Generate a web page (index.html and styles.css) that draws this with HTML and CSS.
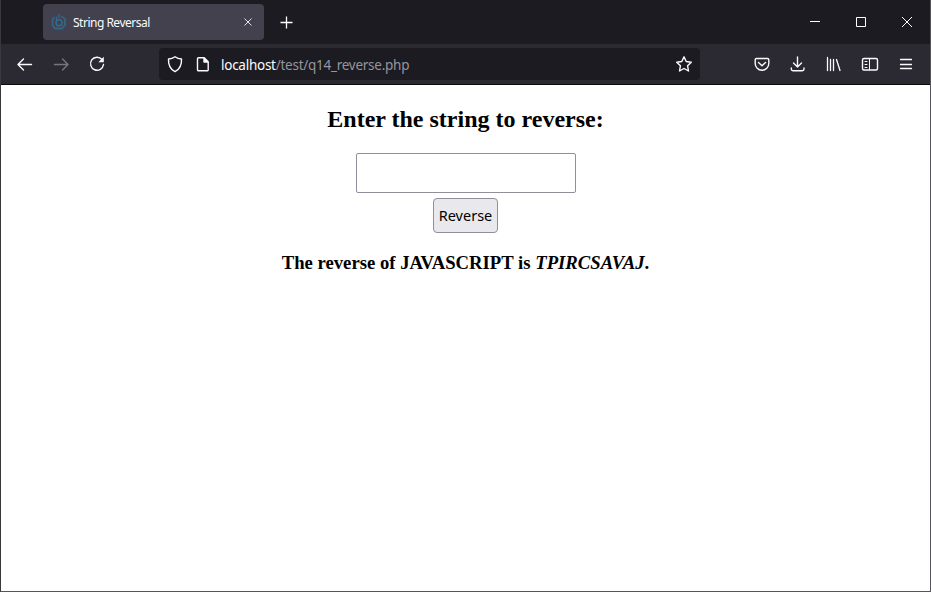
FILE: index.html
```html
<!DOCTYPE html>
<html lang="en">
<head>
<meta charset="utf-8">
<title>String Reversal</title>
<link rel="stylesheet" href="styles.css">
</head>
<body>
<div class="window">
  <header class="titlebar">
    <div class="tab">
      <svg class="favicon" width="16" height="18" viewBox="0 0 16 18" fill="none" stroke="#2f6c93"><path d="M3.500 4L1.500 6.500v5.500L4 15.500h7l3-3.500V6.500L12 4" stroke-width="1.800" stroke-opacity=".85"/><path d="M5.500 3.500v8M8 1v4M11 3v2" stroke-width="1.300"/><circle cx="8" cy="9.800" r="3" stroke-width="1.500"/></svg>
      <span class="tab-title">String Reversal</span>
      <svg class="tab-close" width="10" height="10" viewBox="0 0 10 10" stroke="#e4e4ea" stroke-width="1"><path d="M1.500 1.500l7 7M8.500 1.500l-7 7"/></svg>
    </div>
    <svg class="new-tab" width="14" height="14" viewBox="0 0 14 14" stroke="#fff" stroke-width="1.300"><path d="M7.500 1.500v12M1.500 7.500h12"/></svg>
    <div class="controls">
      <svg width="46" height="44" viewBox="0 0 46 44"><path d="M18 21.500h10" stroke="#fff"/></svg>
      <svg width="46" height="44" viewBox="0 0 46 44"><path d="M18.500 17.500h9v9h-9z" fill="none" stroke="#fff"/></svg>
      <svg width="46" height="44" viewBox="0 0 46 44"><path d="M18 17l10 10M28 17L18 27" stroke="#fff"/></svg>
    </div>
  </header>
  <nav class="toolbar">
    <svg class="tool" viewBox="0 0 36 36"><path d="M24.500 18.500h-13M16.500 13l-5.500 5.500 5.500 5.500"/></svg>
    <svg class="tool dim" viewBox="0 0 36 36"><path d="M11.500 18.500h13M19.500 13l5.500 5.500-5.500 5.500"/></svg>
    <svg class="tool" viewBox="0 0 36 36"><path d="M23 13.500A6.500 6.500 0 1 0 24.500 18.500"/><path d="M24.800 10.800v5.500h-5.500z" fill="#fbfbfe" stroke="none"/></svg>
    <div class="address">
      <svg class="site-icon" viewBox="0 0 20 20"><path d="M10 2.700C8 4.200 5.800 4.900 3.500 5c-.3 5.500 1.700 10.300 6.500 12.700 4.800-2.400 6.800-7.200 6.500-12.700C14.200 4.900 12 4.200 10 2.700z"/></svg>
      <svg class="site-icon page" viewBox="0 0 20 20"><path d="M5.500 3.700h5.700l4 4v8a1 1 0 0 1-1 1H5.500a1 1 0 0 1-1-1v-11a1 1 0 0 1 1-1zM11 4v4h4"/><path d="M11 3.500V8h4.500z" fill="#fbfbfe" stroke="none"/></svg>
      <span class="url"><b>localhost</b>/test/q14_reverse.php</span>
      <svg class="site-icon star" viewBox="0 0 20 20"><path d="M10 2.800l2.200 4.700 5.100.7-3.700 3.600.9 5.200-4.500-2.500L5.500 17l.9-5.200-3.700-3.600 5.100-.7z"/></svg>
    </div>
    <div class="actions">
      <svg class="tool" viewBox="0 0 36 36"><path d="M12.500 12.500h11a1.300 1.300 0 0 1 1.300 1.300v3.700a6.800 6.800 0 0 1-13.600 0v-3.700a1.300 1.300 0 0 1 1.300-1.300zM14.500 16.500l3.500 3.300 3.500-3.300"/></svg>
      <svg class="tool" viewBox="0 0 36 36"><path d="M17.500 11v10M13.500 17l4 4 4-4M11.300 22v1a1.700 1.700 0 0 0 1.700 1.700h9.300a1.700 1.700 0 0 0 1.700-1.700v-1"/></svg>
      <svg class="tool thin" viewBox="0 0 36 36"><path d="M11.500 11.500v13M14.500 13.500v11M17.500 13.500v11M20.500 13.500l3.500 11"/></svg>
      <svg class="tool" viewBox="0 0 36 36"><rect x="10.500" y="12.500" width="15" height="11.500" rx="1.500"/><path d="M17.500 13v11M13 15.500h2M13 18.500h2M13 21.500h2" stroke-width="1"/></svg>
      <svg class="tool thin" viewBox="0 0 36 36"><path d="M12.500 13.500h11M12.500 18.500h11M12.500 22.500h11"/></svg>
    </div>
  </nav>
  <main>
    <h2>Enter the string to reverse:</h2>
    <form>
      <input type="text" aria-label="String">
      <button type="button">Reverse</button>
    </form>
    <h3>The reverse of JAVASCRIPT is <i>TPIRCSAVAJ</i>.</h3>
  </main>
</div>
</body>
</html>
```
FILE: styles.css
```css
* { box-sizing: border-box; }
body { margin: 0; background: #fff; }
svg { display: block; flex: none; }
.window {
  display: flex;
  flex-direction: column;
  height: 592px;
  overflow: hidden;
  border: solid #55555a;
  border-width: 0 1px 1px;
  border-left-color: #38383d;
}
.titlebar {
  display: flex;
  align-items: center;
  height: 44px;
  padding-left: 42px;
  background: #1c1b22;
}
.tab {
  display: flex;
  align-items: center;
  width: 221px;
  height: 36px;
  padding: 0 11px 0 8px;
  border-radius: 4px;
  background: #42414d;
  color: #fbfbfe;
  font: 12px "Noto Sans", sans-serif;
}
.tab-title {
  margin-left: 6px;
  padding-top: 1px;
  font-size: 12px;
  letter-spacing: -.5px;
  white-space: nowrap;
}
.tab-close { margin-left: auto; }
.new-tab { margin-left: 15px; }
.controls { display: flex; margin-left: auto; }
.toolbar {
  display: flex;
  align-items: center;
  height: 41px;
  padding: 0 6px;
  background: #2b2a33;
  border-bottom: 1px solid #0c0c0d;
}
.tool, .site-icon {
  width: 36px;
  height: 36px;
  fill: none;
  stroke: #fbfbfe;
  stroke-width: 1.4;
  stroke-linecap: round;
  stroke-linejoin: round;
}
.dim { stroke: #77767f; }
.thin { stroke-width: 1.3; }
.address {
  display: flex;
  align-items: center;
  width: 541px;
  height: 32px;
  margin-left: 44px;
  padding: 0 6px;
  border-radius: 4px;
  background: #1c1b22;
}
.site-icon { width: 20px; height: 20px; }
.page { margin-left: 8px; }
.star { margin-left: auto; }
.url {
  margin-left: 8px;
  padding-top: 2px;
  color: #96959d;
  font: 13.5px "Noto Sans", sans-serif;
  letter-spacing: -.26px;
}
.url b { color: #fbfbfe; font-weight: 400; }
.actions { display: flex; margin-left: auto; }
main {
  flex: 1;
  background: #fff;
  color: #000;
  font-family: "Liberation Serif", serif;
  text-align: center;
}
h2 { margin: 20px 0 19px; font-size: 24px; line-height: 29px; }
form { display: flex; flex-direction: column; align-items: center; gap: 5px; }
input {
  width: 220px;
  height: 40px;
  border: 1px solid #8f8f9d;
  border-radius: 2px;
  background: #fff;
}
button {
  width: 65px;
  height: 35px;
  padding: 0 0 2px;
  border: 1px solid #8f8f9d;
  border-radius: 4px;
  background: #e9e9ed;
  color: #000;
  font: 14.5px "Noto Sans", sans-serif;
}
h3 { margin: 19px 0; font-size: 18.7px; line-height: 22px; }
```
